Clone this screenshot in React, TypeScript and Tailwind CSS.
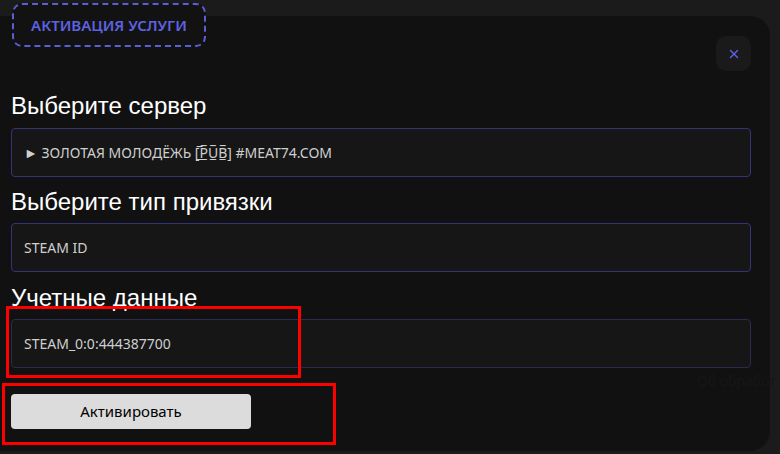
import { X } from 'lucide-react'

const Field = ({ value, dim }: { value: string; dim?: boolean }) => (
  <div
    className={
      'h-[49px] flex items-center px-[12px] rounded-[4px] border bg-[#161616] text-[14px] text-[#cfcfcf] ' +
      (dim ? 'border-[#2a2a52]' : 'border-[#34347a]')
    }
    style={{ fontFamily: '"Noto Sans", "Open Sans", sans-serif' }}
  >
    {value}
  </div>
)

const Label = ({ children }: { children: React.ReactNode }) => (
  <h2 className="text-[24px] leading-[26px] text-white" style={{ fontFamily: '"Liberation Sans", Arial, sans-serif' }}>
    {children}
  </h2>
)

export default function App() {
  return (
    <div className="relative w-[780px] h-[454px] overflow-hidden bg-[#1b1b1b] pt-[16px]">
      <div className="relative w-[780px] h-[435px] -ml-[10px] rounded-r-[20px] bg-[#111111] pl-[21px] pr-[19px]">
        <div className="flex justify-end pt-[20px]">
          <button className="w-[35px] h-[35px] rounded-[10px] bg-[#1a1a1a] flex items-center justify-center text-[#5b5fe0]">
            <X size={14} strokeWidth={2.5} />
          </button>
        </div>
        <div className="mt-[22px]">
          <Label>Выберите сервер</Label>
          <div className="mt-[9px]">
            <Field value="► ЗОЛОТАЯ МОЛОДЁЖЬ [̲̅P̲̅U̲̅B̲̅] #MEAT74.COM" />
          </div>
          <div className="mt-[12px]">
            <Label>Выберите тип привязки</Label>
          </div>
          <div className="mt-[8px]">
            <Field value="STEAM ID" />
          </div>
          <div className="mt-[13px]">
            <Label>Учетные данные</Label>
          </div>
          <div className="mt-[8px]">
            <Field value="STEAM_0:0:444387700" dim />
          </div>
          <button
            className="mt-[26px] w-[240px] h-[35px] rounded-[4px] bg-[#dcdcdc] text-[15px] text-black"
            style={{ fontFamily: '"Noto Sans", "Open Sans", sans-serif' }}
          >
            Активировать
          </button>
        </div>
        <div
          className="absolute left-[707px] top-[354px] whitespace-nowrap text-[14px] text-[#161616]"
          style={{ fontFamily: '"Noto Sans", sans-serif' }}
        >
          Об обработ
        </div>
      </div>

      <div
        className="absolute left-[12px] top-[3px] w-[194px] h-[44px] rounded-[10px] border-2 border-dashed border-[#5b5fd6] bg-[#121212] flex items-center justify-center text-[15px] font-semibold text-[#5d62e0]"
        style={{ fontFamily: '"Noto Sans", "Open Sans", sans-serif' }}
      >
        АКТИВАЦИЯ УСЛУГИ
      </div>

      <div className="absolute left-[6px] top-[306px] w-[295px] h-[72px] border-[3px] border-[#ff0000]" />
      <div className="absolute left-[2px] top-[383px] w-[334px] h-[62px] border-[3px] border-[#ff0000]" />
    </div>
  )
}
